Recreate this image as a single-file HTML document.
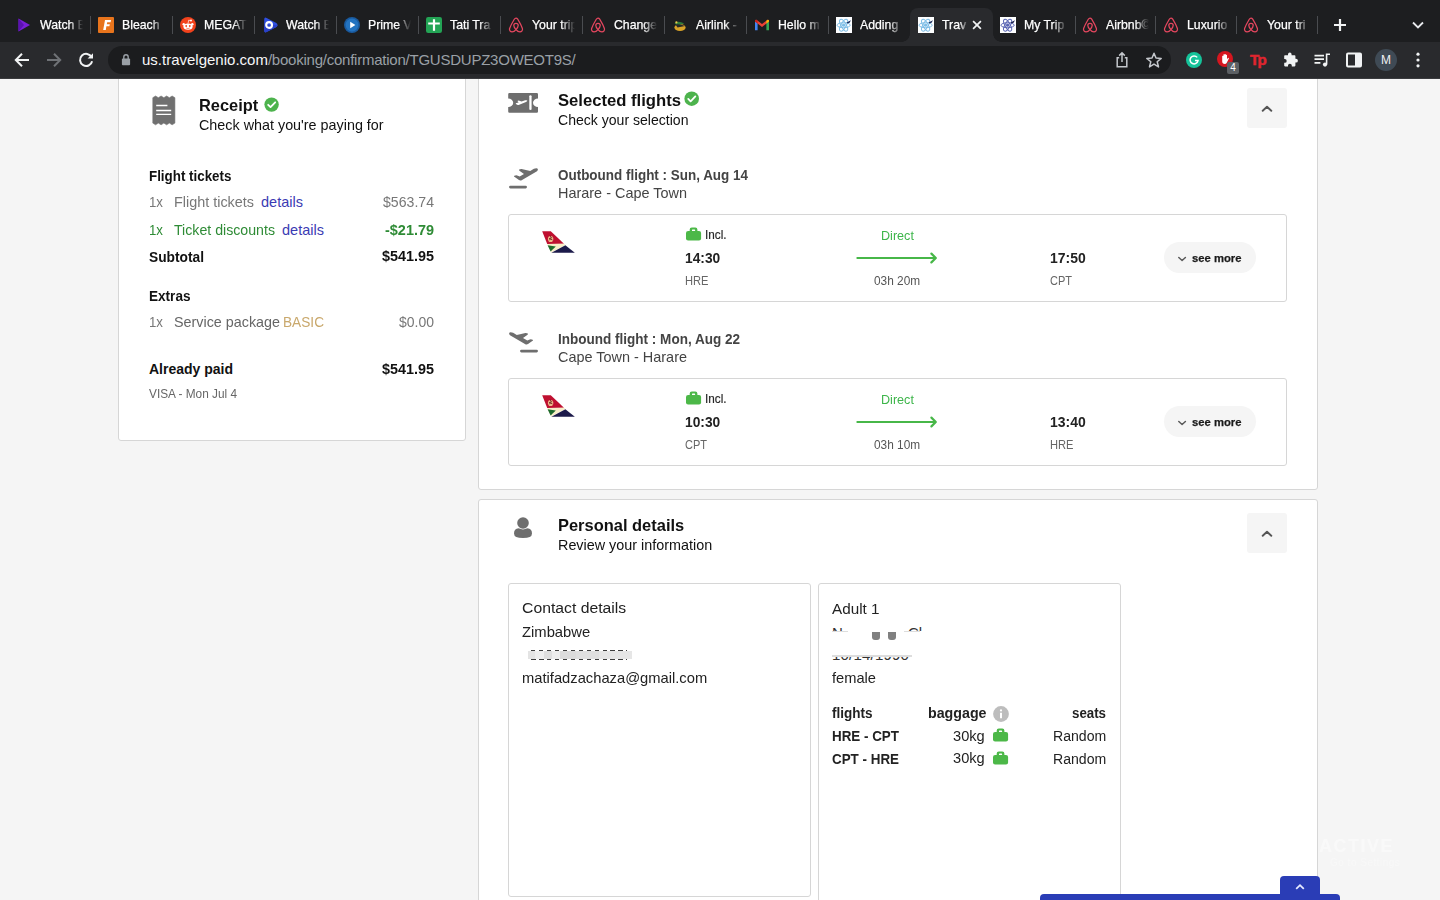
<!DOCTYPE html>
<html><head><meta charset="utf-8">
<style>
*{box-sizing:border-box;margin:0;padding:0}
html,body{width:1440px;height:900px;overflow:hidden;background:#f5f5f5;font-family:"Liberation Sans",sans-serif;}
#root{position:absolute;left:0;top:0;width:1440px;height:900px;overflow:hidden}
.abs{position:absolute}
/* chrome */
#tabstrip{position:absolute;left:0;top:0;width:1440px;height:42px;background:#1d1e20}
#toolbar{position:absolute;left:0;top:41.5px;width:1440px;height:37px;background:#292a2d}
#tbline{position:absolute;left:0;top:78px;width:1440px;height:1px;background:#3a3b3e}
#omni{position:absolute;left:108px;top:45.6px;width:1063px;height:28.4px;border-radius:14.2px;background:#1b1c1e}
.tab{position:absolute;top:8px;height:34px;width:82px}
.tab .t{position:absolute;left:32px;top:9px;width:46px;height:16px;line-height:16px;font-size:13px;color:#fff;-webkit-text-stroke:.25px #fff;white-space:nowrap;overflow:hidden;transform:scaleX(.945);transform-origin:0 50%;
 -webkit-mask-image:linear-gradient(90deg,#000 66%,transparent 97%);mask-image:linear-gradient(90deg,#000 66%,transparent 97%)}
.tab .f{position:absolute;left:8px;top:9px;width:16px;height:16px}
.sep{position:absolute;top:16px;width:1px;height:18px;background:#4a4c50}
#active{position:absolute;left:910px;top:8px;width:83px;height:34px;background:#292a2d;border-radius:8px 8px 0 0}
.tx{position:absolute;white-space:nowrap}
</style></head><body><div id="root">
<!--PAGE-->
<div class="abs" style="left:118px;top:60px;width:348px;height:380.5px;background:#fff;border:1px solid #d6d6d6;border-radius:3px;"></div>
<div class="abs" style="left:477.5px;top:60px;width:840.5px;height:429.5px;background:#fff;border:1px solid #d6d6d6;border-radius:3px;"></div>
<div class="abs" style="left:477.5px;top:498.8px;width:840.5px;height:420px;background:#fff;border:1px solid #d6d6d6;border-radius:3px;"></div>
<div class="abs" style="left:508px;top:214px;width:778.8px;height:88px;background:#fff;border:1px solid #d6d6d6;border-radius:3px;"></div>
<div class="abs" style="left:508px;top:378px;width:778.8px;height:88px;background:#fff;border:1px solid #d6d6d6;border-radius:3px;"></div>
<div class="abs" style="left:508px;top:583px;width:302.5px;height:313.5px;background:#fff;border:1px solid #d6d6d6;border-radius:3px;"></div>
<div class="abs" style="left:818px;top:583px;width:302.5px;height:330px;background:#fff;border:1px solid #d6d6d6;border-radius:3px;"></div>
<div class="abs" style="left:1247.25px;top:87.75px;width:39.5px;height:40px;background:#f5f5f5;border-radius:3px;"></div>
<svg class="abs" style="left:1257px;top:98.05px;width:20px;height:20px" viewBox="0 0 20 20"><path d="M5.7 12.8 L10 8.8 L14.3 12.8" stroke="#555" stroke-width="1.9" fill="none" stroke-linecap="round" stroke-linejoin="round"/></svg>
<div class="abs" style="left:1247.25px;top:512.75px;width:39.5px;height:40px;background:#f5f5f5;border-radius:3px;"></div>
<svg class="abs" style="left:1257px;top:523.05px;width:20px;height:20px" viewBox="0 0 20 20"><path d="M5.7 12.8 L10 8.8 L14.3 12.8" stroke="#555" stroke-width="1.9" fill="none" stroke-linecap="round" stroke-linejoin="round"/></svg>
<div class="abs" style="left:1164.4px;top:241.9px;width:92px;height:31.2px;background:#f5f5f5;border-radius:15.6px;"></div>
<svg class="abs" style="left:1176px;top:252.5px;width:12px;height:12px" viewBox="0 0 12 12"><path d="M2.8 4.5 L6.1 7.5 L9.4 4.5" stroke="#5a5a5a" stroke-width="1.5" fill="none" stroke-linecap="round" stroke-linejoin="round"/></svg>
<div class="abs" style="left:1164.4px;top:405.9px;width:92px;height:31.2px;background:#f5f5f5;border-radius:15.6px;"></div>
<svg class="abs" style="left:1176px;top:416.5px;width:12px;height:12px" viewBox="0 0 12 12"><path d="M2.8 4.5 L6.1 7.5 L9.4 4.5" stroke="#5a5a5a" stroke-width="1.5" fill="none" stroke-linecap="round" stroke-linejoin="round"/></svg>
<svg class="abs" style="left:152px;top:95px;width:24px;height:31px" viewBox="152 95 24 31"><path d="M152.80 97.7 L155.56 96.0 L158.33 97.7 L161.09 96.0 L163.85 97.7 L166.61 96.0 L169.38 97.7 L172.14 96.0 L174.90 97.7 L174.90 123.1 L172.14 124.8 L169.38 123.1 L166.61 124.8 L163.85 123.1 L161.09 124.8 L158.33 123.1 L155.56 124.8 L152.80 123.1 Z" fill="#707070" stroke="#707070" stroke-width=".6" stroke-linejoin="round"/><path d="M156.2 105.5 H167.4 M156.2 110.5 H171.2 M156.2 114.4 H171.2" stroke="#fff" stroke-width="1.3"/></svg>
<svg class="abs" style="left:263.721px;top:96.7211px;width:15.1579px;height:15.1579px" viewBox="-8 -8 16 16"><circle r="7.6" fill="#4db34d"/><path d="M-3.6 0.2 L-1.1 2.7 L3.8 -2.4" stroke="#fff" stroke-width="1.9" fill="none" stroke-linecap="round" stroke-linejoin="round"/></svg>
<svg class="abs" style="left:684.416px;top:91.2158px;width:15.3684px;height:15.3684px" viewBox="-8 -8 16 16"><circle r="7.6" fill="#4db34d"/><path d="M-3.6 0.2 L-1.1 2.7 L3.8 -2.4" stroke="#fff" stroke-width="1.9" fill="none" stroke-linecap="round" stroke-linejoin="round"/></svg>
<svg class="abs" style="left:507px;top:92px;width:32px;height:22px" viewBox="507 92 32 22"><path d="M509.4 93 H536.8 Q538 93 538 94.2 V98.4 A5 4.3 0 0 0 538 107 V111.6 Q538 112.8 536.8 112.8 H509.4 Q508.2 112.8 508.2 111.6 V107 A5 4.3 0 0 0 508.2 98.4 V94.2 Q508.2 93 509.4 93 Z" fill="#6e6e6e"/><path d="M530.45 96.3 V108.9" stroke="#fff" stroke-width="2.3" stroke-linecap="round"/><path d="M515.6 103.2 L518.6 102.4 L517.4 100.9 L518.6 100.5 L521.6 101.6 L525.2 100.3 Q527 99.9 527.3 100.6 Q527.4 101.4 526 102 L518.6 104.9 Q517.4 105.2 516.6 104.5 Z" fill="#fff"/></svg>
<svg class="abs" style="left:506px;top:166px;width:36px;height:24px" viewBox="506 166 36 24"><g><path d="M519.2 169.6 Q520 168.9 521.6 169 L530.2 171 L533.9 168.8 Q535.4 168.1 536.4 168.2 Q537.6 168.4 537.9 169.2 Q538 170.4 537 171.2 L521.2 180.4 Q520 180.8 519 180.1 L514 176.5 Q513.8 176 514.4 175.7 Q515.6 175.1 517.2 175.4 L519.7 176.6 L524 174 L519.4 170.7 Q518.8 170.1 519.2 169.6 Z" fill="#6e6e6e"/><path d="M510.4 187.05 H525.6" stroke="#6e6e6e" stroke-width="2.7" stroke-linecap="round"/></g></svg>
<svg class="abs" style="left:506px;top:330px;width:36px;height:24px" viewBox="506 166 36 24"><g transform="translate(1047 0) scale(-1 1)"><path d="M519.2 169.6 Q520 168.9 521.6 169 L530.2 171 L533.9 168.8 Q535.4 168.1 536.4 168.2 Q537.6 168.4 537.9 169.2 Q538 170.4 537 171.2 L521.2 180.4 Q520 180.8 519 180.1 L514 176.5 Q513.8 176 514.4 175.7 Q515.6 175.1 517.2 175.4 L519.7 176.6 L524 174 L519.4 170.7 Q518.8 170.1 519.2 169.6 Z" fill="#6e6e6e"/><path d="M510.4 187.05 H525.6" stroke="#6e6e6e" stroke-width="2.7" stroke-linecap="round"/></g></svg>
<svg class="abs" style="left:541px;top:229px;width:36px;height:25px" viewBox="541 229 36 25"><path d="M542.2 231.2 H550.8 L564 243.7 L547.2 243.9 Z" fill="#bf1030"/><ellipse cx="550.6" cy="239" rx="2.7" ry="3.1" fill="#f0b88a"/><path d="M549 238.3 L552.4 239.9 M549.2 240.3 L551.8 237.4 M550.2 235.6 L551.2 238" stroke="#5a1a12" stroke-width=".8"/><path d="M547.2 243.9 L564 243.7 L565.4 245 L551.2 252.6 Z" fill="#f8eec8"/><path d="M547.6 245.3 L555.8 246.4 L550.6 251.6 Z" fill="#1e6b2c"/><path d="M565.4 245.2 L574.8 252.7 H551.4 Z" fill="#1c1a4a"/></svg>
<svg class="abs" style="left:541px;top:393px;width:36px;height:25px" viewBox="541 229 36 25"><path d="M542.2 231.2 H550.8 L564 243.7 L547.2 243.9 Z" fill="#bf1030"/><ellipse cx="550.6" cy="239" rx="2.7" ry="3.1" fill="#f0b88a"/><path d="M549 238.3 L552.4 239.9 M549.2 240.3 L551.8 237.4 M550.2 235.6 L551.2 238" stroke="#5a1a12" stroke-width=".8"/><path d="M547.2 243.9 L564 243.7 L565.4 245 L551.2 252.6 Z" fill="#f8eec8"/><path d="M547.6 245.3 L555.8 246.4 L550.6 251.6 Z" fill="#1e6b2c"/><path d="M565.4 245.2 L574.8 252.7 H551.4 Z" fill="#1c1a4a"/></svg>
<svg class="abs" style="left:684.7px;top:226.3px;width:17.2px;height:15.6px" viewBox="-1 -1 17.2 15.6"><path fill-rule="evenodd" d="M3.7 4.6 V2.5 Q3.7 .4 5.8 .4 H9.3 Q11.4 .4 11.4 2.5 V4.6 Z M6 4.2 V3 Q6 2.4 6.6 2.4 H8.5 Q9.1 2.4 9.1 3 V4.2 Z" fill="#4cb848"/><rect x="0" y="3.9" width="15.1" height="9.7" rx="2.1" fill="#4cb848"/></svg>
<svg class="abs" style="left:684.7px;top:390.3px;width:17.2px;height:15.6px" viewBox="-1 -1 17.2 15.6"><path fill-rule="evenodd" d="M3.7 4.6 V2.5 Q3.7 .4 5.8 .4 H9.3 Q11.4 .4 11.4 2.5 V4.6 Z M6 4.2 V3 Q6 2.4 6.6 2.4 H8.5 Q9.1 2.4 9.1 3 V4.2 Z" fill="#4cb848"/><rect x="0" y="3.9" width="15.1" height="9.7" rx="2.1" fill="#4cb848"/></svg>
<svg class="abs" style="left:992px;top:726.9px;width:17.2px;height:15.6px" viewBox="-1 -1 17.2 15.6"><path fill-rule="evenodd" d="M3.7 4.6 V2.5 Q3.7 .4 5.8 .4 H9.3 Q11.4 .4 11.4 2.5 V4.6 Z M6 4.2 V3 Q6 2.4 6.6 2.4 H8.5 Q9.1 2.4 9.1 3 V4.2 Z" fill="#4cb848"/><rect x="0" y="3.9" width="15.1" height="9.7" rx="2.1" fill="#4cb848"/></svg>
<svg class="abs" style="left:992px;top:749.8px;width:17.2px;height:15.6px" viewBox="-1 -1 17.2 15.6"><path fill-rule="evenodd" d="M3.7 4.6 V2.5 Q3.7 .4 5.8 .4 H9.3 Q11.4 .4 11.4 2.5 V4.6 Z M6 4.2 V3 Q6 2.4 6.6 2.4 H8.5 Q9.1 2.4 9.1 3 V4.2 Z" fill="#4cb848"/><rect x="0" y="3.9" width="15.1" height="9.7" rx="2.1" fill="#4cb848"/></svg>
<svg class="abs" style="left:856px;top:251.3px;width:83px;height:14px" viewBox="856 -7 83 14"><path d="M857.4 0 H935.6 M931.4 -4.4 L935.8 0 L931.4 4.4" stroke="#47b748" stroke-width="2.2" fill="none" stroke-linecap="round" stroke-linejoin="round"/></svg>
<svg class="abs" style="left:856px;top:415.3px;width:83px;height:14px" viewBox="856 -7 83 14"><path d="M857.4 0 H935.6 M931.4 -4.4 L935.8 0 L931.4 4.4" stroke="#47b748" stroke-width="2.2" fill="none" stroke-linecap="round" stroke-linejoin="round"/></svg>
<svg class="abs" style="left:512px;top:516px;width:22px;height:24px" viewBox="512 516 22 24"><circle cx="523" cy="523" r="5.8" fill="#6e6e6e"/><path d="M514 533.4 Q514 528.6 518.6 528.3 Q523 530.6 527.4 528.3 Q532 528.6 532 533.4 Q532 538 523 538 Q514 538 514 533.4 Z" fill="#6e6e6e"/></svg>
<svg class="abs" style="left:992.8px;top:706px;width:16px;height:16px" viewBox="-8 -8 16 16"><circle r="7.9" fill="#bdbdbd"/><circle cx="0" cy="-3.6" r="1.1" fill="#fff"/><path d="M0 -1.2 V4.2" stroke="#fff" stroke-width="2"/></svg>
<div class="abs" style="left:527.9px;top:650.7px;width:104.1px;height:8.1px;background:linear-gradient(90deg,#e4e4e4 0 7%,#eeeeee 7% 15%,#dedede 15% 23%,#ececec 23% 31%,#dcdcdc 31% 46%,#e0e0e0 46% 68%,#e6e6e6 68% 100%)"></div>
<div class="abs" style="left:531.2px;top:649.8px;width:96px;height:1.1px;background:repeating-linear-gradient(90deg,#1c1c1c 0 4.2px,transparent 4.2px 7.95px);opacity:.85"></div>
<div class="abs" style="left:530.6px;top:659px;width:96.6px;height:1.1px;background:repeating-linear-gradient(90deg,#1c1c1c 0 4.6px,transparent 4.6px 7.95px);opacity:.85"></div>
<div class="abs" style="left:832px;top:627px;width:90px;height:4.4px;overflow:hidden"><div class="tx" style="left:0;top:-4.2px;font-size:15px;line-height:20px;color:#333">N</div><div class="tx" style="left:76px;top:-4.2px;font-size:15px;line-height:20px;color:#333">Cl</div></div>
<div class="abs" style="left:832px;top:630.6px;width:16px;height:1.2px;background:#ddd"></div><div class="abs" style="left:904px;top:630.6px;width:16px;height:1.2px;background:#ddd"></div>
<div class="abs" style="left:872px;top:631.8px;width:8.1px;height:8.3px;background:#808080;border-radius:0 0 3px 3px"></div>
<div class="abs" style="left:888.2px;top:631.8px;width:8.1px;height:8.3px;background:#808080;border-radius:0 0 3px 3px"></div>
<div class="abs" style="left:832px;top:656.2px;width:82px;height:4.3px;overflow:hidden"><div class="tx" style="left:0;top:-11.1px;font-size:15px;line-height:20px;color:#333;letter-spacing:.2px">10/14/1990</div></div>
<div class="abs" style="left:832px;top:655.4px;width:80px;height:1.2px;background:#ddd"></div>
<div class="abs" style="left:1039.7px;top:894.4px;width:300.3px;height:10px;background:#2a3db6;border-radius:4px 4px 0 0"></div>
<div class="abs" style="left:1280px;top:876.3px;width:39.8px;height:20px;background:#2a3db6;border-radius:4px 4px 0 0"></div>
<svg class="abs" style="left:1294px;top:881.4px;width:12px;height:12px" viewBox="0 0 12 12"><path d="M2.2 7.8 L6 4.2 L9.8 7.8" stroke="#e6ebff" stroke-width="1.8" fill="none"/></svg>
<div class="tx" style="left:1319px;top:836px;font-size:18px;line-height:20px;font-weight:bold;color:#fff;opacity:.42;letter-spacing:1.5px">ACTIVE</div><div class="tx" style="left:1330px;top:856px;font-size:10px;line-height:14px;color:#fff;opacity:.3;letter-spacing:.5px">Go to Settings</div>
<div class="tx" style="left:199.00px;top:94.78px;height:20px;line-height:20px;font-size:16.50px;color:#111;font-weight:bold;transform:scaleX(0.9948);transform-origin:0 50%;">Receipt</div>
<div class="tx" style="left:199.00px;top:114.88px;height:20px;line-height:20px;font-size:14.50px;color:#111;transform:scaleX(0.9896);transform-origin:0 50%;">Check what you're paying for</div>
<div class="tx" style="left:149.00px;top:166.15px;height:20px;line-height:20px;font-size:14.00px;color:#111;font-weight:bold;transform:scaleX(0.9542);transform-origin:0 50%;">Flight tickets</div>
<div class="tx" style="left:149.00px;top:191.58px;height:20px;line-height:20px;font-size:14.50px;color:#777;transform:scaleX(0.9134);transform-origin:0 50%;">1x</div>
<div class="tx" style="left:174.00px;top:191.58px;height:20px;line-height:20px;font-size:14.50px;color:#777;transform:scaleX(0.9926);transform-origin:0 50%;">Flight tickets</div>
<div class="tx" style="left:261.00px;top:191.58px;height:20px;line-height:20px;font-size:14.50px;color:#3b3bb3;">details</div>
<div class="tx" style="left:383.00px;top:191.58px;height:20px;line-height:20px;font-size:14.50px;color:#777;transform:scaleX(0.9729);transform-origin:0 50%;">$563.74</div>
<div class="tx" style="left:149.00px;top:219.98px;height:20px;line-height:20px;font-size:14.50px;color:#2e8b35;transform:scaleX(0.9134);transform-origin:0 50%;">1x</div>
<div class="tx" style="left:174.00px;top:219.98px;height:20px;line-height:20px;font-size:14.50px;color:#2e8b35;transform:scaleX(0.9766);transform-origin:0 50%;">Ticket discounts</div>
<div class="tx" style="left:282.00px;top:219.98px;height:20px;line-height:20px;font-size:14.50px;color:#3b3bb3;">details</div>
<div class="tx" style="left:385.00px;top:219.98px;height:20px;line-height:20px;font-size:14.50px;color:#2e8b35;font-weight:bold;transform:scaleX(0.9962);transform-origin:0 50%;">-$21.79</div>
<div class="tx" style="left:149.00px;top:246.65px;height:20px;line-height:20px;font-size:14.00px;color:#111;font-weight:bold;transform:scaleX(0.9821);transform-origin:0 50%;">Subtotal</div>
<div class="tx" style="left:382.00px;top:246.48px;height:20px;line-height:20px;font-size:14.50px;color:#111;font-weight:bold;transform:scaleX(0.9920);transform-origin:0 50%;">$541.95</div>
<div class="tx" style="left:149.00px;top:286.15px;height:20px;line-height:20px;font-size:14.00px;color:#111;font-weight:bold;transform:scaleX(0.9693);transform-origin:0 50%;">Extras</div>
<div class="tx" style="left:149.00px;top:311.68px;height:20px;line-height:20px;font-size:14.50px;color:#777;transform:scaleX(0.9134);transform-origin:0 50%;">1x</div>
<div class="tx" style="left:174.00px;top:311.68px;height:20px;line-height:20px;font-size:14.50px;color:#666;transform:scaleX(0.9888);transform-origin:0 50%;">Service package</div>
<div class="tx" style="left:283.00px;top:311.85px;height:20px;line-height:20px;font-size:14.00px;color:#c9a86c;transform:scaleX(0.9758);transform-origin:0 50%;">BASIC</div>
<div class="tx" style="left:399.00px;top:311.68px;height:20px;line-height:20px;font-size:14.50px;color:#777;transform:scaleX(0.9643);transform-origin:0 50%;">$0.00</div>
<div class="tx" style="left:149.00px;top:359.15px;height:20px;line-height:20px;font-size:14.00px;color:#111;font-weight:bold;">Already paid</div>
<div class="tx" style="left:382.00px;top:358.98px;height:20px;line-height:20px;font-size:14.50px;color:#111;font-weight:bold;transform:scaleX(0.9920);transform-origin:0 50%;">$541.95</div>
<div class="tx" style="left:149.00px;top:383.94px;height:20px;line-height:20px;font-size:12.00px;color:#666;transform:scaleX(0.9846);transform-origin:0 50%;">VISA - Mon Jul 4</div>
<div class="tx" style="left:558.00px;top:90.28px;height:20px;line-height:20px;font-size:16.50px;color:#111;font-weight:bold;transform:scaleX(1.0086);transform-origin:0 50%;">Selected flights</div>
<div class="tx" style="left:558.00px;top:110.48px;height:20px;line-height:20px;font-size:14.50px;color:#111;transform:scaleX(0.9696);transform-origin:0 50%;">Check your selection</div>
<div class="tx" style="left:558.00px;top:164.58px;height:20px;line-height:20px;font-size:14.20px;color:#444;font-weight:bold;transform:scaleX(0.9479);transform-origin:0 50%;">Outbound flight : Sun, Aug 14</div>
<div class="tx" style="left:558.00px;top:183.48px;height:20px;line-height:20px;font-size:14.50px;color:#444;transform:scaleX(0.9961);transform-origin:0 50%;">Harare - Cape Town</div>
<div class="tx" style="left:558.00px;top:328.58px;height:20px;line-height:20px;font-size:14.20px;color:#444;font-weight:bold;transform:scaleX(0.9530);transform-origin:0 50%;">Inbound flight : Mon, Aug 22</div>
<div class="tx" style="left:558.00px;top:347.48px;height:20px;line-height:20px;font-size:14.50px;color:#444;transform:scaleX(0.9961);transform-origin:0 50%;">Cape Town - Harare</div>
<div class="tx" style="left:704.50px;top:225.17px;height:20px;line-height:20px;font-size:12.50px;color:#2a2a2a;-webkit-text-stroke:.2px #2a2a2a;transform:scaleX(0.9373);transform-origin:0 50%;">Incl.</div>
<div class="tx" style="left:685.30px;top:247.85px;height:20px;line-height:20px;font-size:14.00px;color:#222;font-weight:bold;transform:scaleX(0.9829);transform-origin:0 50%;">14:30</div>
<div class="tx" style="left:685.00px;top:271.20px;height:20px;line-height:20px;font-size:13.00px;color:#666;transform:scaleX(0.8560);transform-origin:0 50%;">HRE</div>
<div class="tx" style="left:880.60px;top:226.27px;height:20px;line-height:20px;font-size:12.50px;color:#3db54a;transform:scaleX(1.0075);transform-origin:0 50%;">Direct</div>
<div class="tx" style="left:873.90px;top:271.14px;height:20px;line-height:20px;font-size:12.00px;color:#555;transform:scaleX(0.9871);transform-origin:0 50%;">03h 20m</div>
<div class="tx" style="left:1049.80px;top:247.85px;height:20px;line-height:20px;font-size:14.00px;color:#222;font-weight:bold;transform:scaleX(0.9969);transform-origin:0 50%;">17:50</div>
<div class="tx" style="left:1050.00px;top:271.20px;height:20px;line-height:20px;font-size:13.00px;color:#666;transform:scaleX(0.8462);transform-origin:0 50%;">CPT</div>
<div class="tx" style="left:1192.00px;top:247.92px;height:20px;line-height:20px;font-size:11.50px;color:#1a1a1a;font-weight:bold;-webkit-text-stroke:.25px #1a1a1a;transform:scaleX(0.9799);transform-origin:0 50%;">see more</div>
<div class="tx" style="left:704.50px;top:389.17px;height:20px;line-height:20px;font-size:12.50px;color:#2a2a2a;-webkit-text-stroke:.2px #2a2a2a;transform:scaleX(0.9373);transform-origin:0 50%;">Incl.</div>
<div class="tx" style="left:685.30px;top:411.85px;height:20px;line-height:20px;font-size:14.00px;color:#222;font-weight:bold;transform:scaleX(0.9829);transform-origin:0 50%;">10:30</div>
<div class="tx" style="left:685.00px;top:435.20px;height:20px;line-height:20px;font-size:13.00px;color:#666;transform:scaleX(0.8462);transform-origin:0 50%;">CPT</div>
<div class="tx" style="left:880.60px;top:390.27px;height:20px;line-height:20px;font-size:12.50px;color:#3db54a;transform:scaleX(1.0075);transform-origin:0 50%;">Direct</div>
<div class="tx" style="left:873.90px;top:435.14px;height:20px;line-height:20px;font-size:12.00px;color:#555;transform:scaleX(0.9871);transform-origin:0 50%;">03h 10m</div>
<div class="tx" style="left:1049.80px;top:411.85px;height:20px;line-height:20px;font-size:14.00px;color:#222;font-weight:bold;transform:scaleX(0.9969);transform-origin:0 50%;">13:40</div>
<div class="tx" style="left:1050.00px;top:435.20px;height:20px;line-height:20px;font-size:13.00px;color:#666;transform:scaleX(0.8560);transform-origin:0 50%;">HRE</div>
<div class="tx" style="left:1192.00px;top:411.92px;height:20px;line-height:20px;font-size:11.50px;color:#1a1a1a;font-weight:bold;-webkit-text-stroke:.25px #1a1a1a;transform:scaleX(0.9799);transform-origin:0 50%;">see more</div>
<div class="tx" style="left:558.30px;top:514.88px;height:20px;line-height:20px;font-size:16.50px;color:#111;font-weight:bold;transform:scaleX(0.9971);transform-origin:0 50%;">Personal details</div>
<div class="tx" style="left:558.30px;top:535.08px;height:20px;line-height:20px;font-size:14.50px;color:#111;transform:scaleX(0.9913);transform-origin:0 50%;">Review your information</div>
<div class="tx" style="left:521.80px;top:598.43px;height:20px;line-height:20px;font-size:15.50px;color:#222;transform:scaleX(1.0163);transform-origin:0 50%;">Contact details</div>
<div class="tx" style="left:521.80px;top:621.78px;height:20px;line-height:20px;font-size:14.50px;color:#222;transform:scaleX(1.0196);transform-origin:0 50%;">Zimbabwe</div>
<div class="tx" style="left:521.80px;top:667.68px;height:20px;line-height:20px;font-size:14.50px;color:#222;transform:scaleX(1.0156);transform-origin:0 50%;">matifadzachaza@gmail.com</div>
<div class="tx" style="left:832.00px;top:598.53px;height:20px;line-height:20px;font-size:15.50px;color:#222;transform:scaleX(0.9841);transform-origin:0 50%;">Adult 1</div>
<div class="tx" style="left:832.00px;top:667.98px;height:20px;line-height:20px;font-size:14.50px;color:#222;transform:scaleX(1.0108);transform-origin:0 50%;">female</div>
<div class="tx" style="left:832.00px;top:702.85px;height:20px;line-height:20px;font-size:14.00px;color:#222;font-weight:bold;transform:scaleX(0.9643);transform-origin:0 50%;">flights</div>
<div class="tx" style="left:928.00px;top:702.85px;height:20px;line-height:20px;font-size:14.00px;color:#222;font-weight:bold;transform:scaleX(1.0160);transform-origin:0 50%;">baggage</div>
<div class="tx" style="left:1072.00px;top:702.85px;height:20px;line-height:20px;font-size:14.00px;color:#222;font-weight:bold;transform:scaleX(0.9494);transform-origin:0 50%;">seats</div>
<div class="tx" style="left:832.00px;top:725.75px;height:20px;line-height:20px;font-size:14.00px;color:#222;font-weight:bold;transform:scaleX(0.9571);transform-origin:0 50%;">HRE - CPT</div>
<div class="tx" style="left:953.30px;top:725.58px;height:20px;line-height:20px;font-size:14.50px;color:#222;transform:scaleX(1.0078);transform-origin:0 50%;">30kg</div>
<div class="tx" style="left:1052.70px;top:725.75px;height:20px;line-height:20px;font-size:14.00px;color:#222;transform:scaleX(1.0071);transform-origin:0 50%;">Random</div>
<div class="tx" style="left:832.00px;top:748.65px;height:20px;line-height:20px;font-size:14.00px;color:#222;font-weight:bold;transform:scaleX(0.9571);transform-origin:0 50%;">CPT - HRE</div>
<div class="tx" style="left:953.30px;top:748.48px;height:20px;line-height:20px;font-size:14.50px;color:#222;transform:scaleX(1.0078);transform-origin:0 50%;">30kg</div>
<div class="tx" style="left:1052.70px;top:748.65px;height:20px;line-height:20px;font-size:14.00px;color:#222;transform:scaleX(1.0071);transform-origin:0 50%;">Random</div>
<!--CHROME-->
<div id="tabstrip"></div><div id="toolbar"></div><div id="active"></div><div class="abs" style="left:902px;top:34px;width:8px;height:8px;background:radial-gradient(circle at 0 0,#1d1e20 7.5px,#292a2d 8px)"></div><div class="abs" style="left:993px;top:34px;width:8px;height:8px;background:radial-gradient(circle at 100% 0,#1d1e20 7.5px,#292a2d 8px)"></div>
<div class="tab" style="left:8px"><svg class="f" viewBox="0 0 16 16"><path d="M2.5 1.5 L14 8 L2.5 14.5 Z" fill="#7a1fd6"/><path d="M2.5 1.5 L8 8 L2.5 14.5 Z" fill="#5a12b0"/></svg><div class="t" style="width:47px">Watch B</div></div>
<div class="tab" style="left:90px"><svg class="f" viewBox="0 0 16 16"><rect width="16" height="16" rx="1" fill="#e8741c"/><path d="M5.2 13 L7 3 H13 L12.6 5.2 H9.2 L8.8 7.2 H11.8 L11.4 9.3 H8.4 L7.8 13 Z" fill="#fff"/></svg><div class="t" style="width:47px">Bleach</div></div>
<div class="tab" style="left:172px"><svg class="f" viewBox="0 0 16 16"><circle cx="8" cy="8" r="8" fill="#f2421c"/><ellipse cx="8" cy="9.6" rx="4.6" ry="3.2" fill="#fff"/><circle cx="12.3" cy="7.3" r="1.2" fill="#fff"/><circle cx="3.7" cy="7.3" r="1.2" fill="#fff"/><circle cx="11" cy="3.6" r="1" fill="#fff"/><path d="M8 6.5 L8.7 3.2 L11 3.7" stroke="#fff" stroke-width=".7" fill="none"/><circle cx="6.2" cy="9" r=".9" fill="#f2421c"/><circle cx="9.8" cy="9" r=".9" fill="#f2421c"/><path d="M6.2 11 Q8 12.2 9.8 11" stroke="#f2421c" stroke-width=".6" fill="none"/></svg><div class="t" style="width:47px">MEGAT</div></div>
<div class="tab" style="left:254px"><svg class="f" viewBox="0 0 16 16"><path d="M2.2 2.4 Q2.2 -.2 4.6 1 L14.4 6 Q16.6 8 14.4 10 L4.6 15 Q2.2 16.2 2.2 13.6 Z" fill="#2f4fe0"/><path d="M2.2 8 V13.6 Q2.2 16.2 4.6 15 L14.4 10 Q15.4 9.2 15.6 8 Z" fill="#2a41c8"/><circle cx="7.1" cy="8" r="2.9" fill="none" stroke="#fff" stroke-width="2.1"/></svg><div class="t" style="width:47px">Watch B</div></div>
<div class="tab" style="left:336px"><svg class="f" viewBox="0 0 16 16"><circle cx="8" cy="8" r="8" fill="#1a5a9e"/><circle cx="8" cy="8" r="6.4" fill="#2373c0"/><path d="M6.2 4.8 L11.4 8 L6.2 11.2 Z" fill="#fff"/></svg><div class="t" style="width:47px">Prime V</div></div>
<div class="tab" style="left:418px"><svg class="f" viewBox="0 0 16 16"><rect width="16" height="16" rx="2.2" fill="#23a455"/><path d="M6.9 2.2 H9.1 V5.6 H13.8 V7.6 H9.1 V13.8 H6.9 V7.6 H2.2 V5.6 H6.9 Z" fill="#fff"/></svg><div class="t" style="width:47px">Tati Tra</div></div>
<div class="tab" style="left:500px"><svg class="f" viewBox="0 0 16 16"><path d="M8 12.6 C6.6 10.9 5.8 9.6 5.8 8.4 C5.8 7.1 6.8 6.3 8 6.3 C9.2 6.3 10.2 7.1 10.2 8.4 C10.2 9.6 9.4 10.9 8 12.6 Z M8 12.6 C6.9 13.9 5.6 14.9 4.1 14.9 C2.3 14.9 1.1 13.3 1.6 11.5 C2.3 9.5 4.6 5 6.3 2.2 C6.8 1.4 7.3 1 8 1 C8.7 1 9.2 1.4 9.7 2.2 C11.4 5 13.7 9.5 14.4 11.5 C14.9 13.3 13.7 14.9 11.9 14.9 C10.4 14.9 9.1 13.9 8 12.6 Z" fill="none" stroke="#e5475f" stroke-width="1.25"/></svg><div class="t" style="width:47px">Your trip</div></div>
<div class="tab" style="left:582px"><svg class="f" viewBox="0 0 16 16"><path d="M8 12.6 C6.6 10.9 5.8 9.6 5.8 8.4 C5.8 7.1 6.8 6.3 8 6.3 C9.2 6.3 10.2 7.1 10.2 8.4 C10.2 9.6 9.4 10.9 8 12.6 Z M8 12.6 C6.9 13.9 5.6 14.9 4.1 14.9 C2.3 14.9 1.1 13.3 1.6 11.5 C2.3 9.5 4.6 5 6.3 2.2 C6.8 1.4 7.3 1 8 1 C8.7 1 9.2 1.4 9.7 2.2 C11.4 5 13.7 9.5 14.4 11.5 C14.9 13.3 13.7 14.9 11.9 14.9 C10.4 14.9 9.1 13.9 8 12.6 Z" fill="none" stroke="#e5475f" stroke-width="1.25"/></svg><div class="t" style="width:47px">Change</div></div>
<div class="tab" style="left:664px"><svg class="f" viewBox="0 0 16 16"><ellipse cx="8" cy="10.5" rx="5.6" ry="3.6" fill="#d9a227"/><path d="M2.6 6.2 Q6 3.2 12.4 6.6 Q8 7.4 6 9.4 Z" fill="#2f7d3a"/><path d="M3.5 7.5 Q8 6.8 13.2 9 Q9 10 5.5 10.4 Z" fill="#26282a"/><circle cx="4.4" cy="5.4" r="1.1" fill="#e9c84a"/></svg><div class="t" style="width:47px">Airlink -</div></div>
<div class="tab" style="left:746px"><svg class="f" viewBox="0 0 16 16"><path d="M1 13.2 V4 L3.6 6 V13.2 Z" fill="#4285f4"/><path d="M15 13.2 V4 L12.4 6 V13.2 Z" fill="#34a853"/><path d="M1 4 Q1 2.6 2.4 2.7 L8 7 L13.6 2.7 Q15 2.6 15 4 L15 4.6 L8 10 L1 4.6 Z" fill="#ea4335"/><path d="M1 4.6 V3.9 Q1 2.6 2.4 2.7 L3.6 3.7 V6.6 Z" fill="#c5221f"/><path d="M15 4.6 V3.9 Q15 2.6 13.6 2.7 L12.4 3.7 V6.6 Z" fill="#fbbc04"/></svg><div class="t" style="width:47px">Hello m</div></div>
<div class="tab" style="left:828px"><svg class="f" viewBox="0 0 16 16"><rect width="16" height="16" fill="#fdfeff"/><g fill="none" stroke="#7dbde6" stroke-width="1"><ellipse cx="7.6" cy="8.2" rx="6.6" ry="2.5"/><ellipse cx="7.6" cy="8.2" rx="6.6" ry="2.5" transform="rotate(60 7.6 8.2)"/><ellipse cx="7.6" cy="8.2" rx="6.6" ry="2.5" transform="rotate(120 7.6 8.2)"/></g><circle cx="7.6" cy="8.2" r="1.6" fill="#7dbde6"/><path d="M10.5 5.5 L15 3.2 L13.6 5.8 L11.6 6.6 Z" fill="#1c2b5a"/></svg><div class="t" style="width:47px">Adding</div></div>
<div class="tab" style="left:910px"><svg class="f" viewBox="0 0 16 16"><rect width="16" height="16" fill="#fdfeff"/><g fill="none" stroke="#7dbde6" stroke-width="1"><ellipse cx="7.6" cy="8.2" rx="6.6" ry="2.5"/><ellipse cx="7.6" cy="8.2" rx="6.6" ry="2.5" transform="rotate(60 7.6 8.2)"/><ellipse cx="7.6" cy="8.2" rx="6.6" ry="2.5" transform="rotate(120 7.6 8.2)"/></g><circle cx="7.6" cy="8.2" r="1.6" fill="#7dbde6"/><path d="M10.5 5.5 L15 3.2 L13.6 5.8 L11.6 6.6 Z" fill="#1c2b5a"/></svg><div class="t" style="width:29px">Trav</div><svg class="abs" style="left:59px;top:9px;width:16px;height:16px" viewBox="0 0 16 16"><path d="M4.1 4.1 L11.9 11.9 M11.9 4.1 L4.1 11.9" stroke="#f1f3f4" stroke-width="1.7" fill="none"/></svg></div>
<div class="tab" style="left:992px"><svg class="f" viewBox="0 0 16 16"><rect width="16" height="16" fill="#fdfeff"/><g fill="none" stroke="#5a66b4" stroke-width="1"><ellipse cx="7.6" cy="8.2" rx="6.6" ry="2.5"/><ellipse cx="7.6" cy="8.2" rx="6.6" ry="2.5" transform="rotate(60 7.6 8.2)"/><ellipse cx="7.6" cy="8.2" rx="6.6" ry="2.5" transform="rotate(120 7.6 8.2)"/></g><circle cx="7.6" cy="8.2" r="1.6" fill="#5a66b4"/><path d="M10.5 5.5 L15 3.2 L13.6 5.8 L11.6 6.6 Z" fill="#1c2350"/></svg><div class="t" style="width:47px">My Trip</div></div>
<div class="tab" style="left:1073.5px"><svg class="f" viewBox="0 0 16 16"><path d="M8 12.6 C6.6 10.9 5.8 9.6 5.8 8.4 C5.8 7.1 6.8 6.3 8 6.3 C9.2 6.3 10.2 7.1 10.2 8.4 C10.2 9.6 9.4 10.9 8 12.6 Z M8 12.6 C6.9 13.9 5.6 14.9 4.1 14.9 C2.3 14.9 1.1 13.3 1.6 11.5 C2.3 9.5 4.6 5 6.3 2.2 C6.8 1.4 7.3 1 8 1 C8.7 1 9.2 1.4 9.7 2.2 C11.4 5 13.7 9.5 14.4 11.5 C14.9 13.3 13.7 14.9 11.9 14.9 C10.4 14.9 9.1 13.9 8 12.6 Z" fill="none" stroke="#e5475f" stroke-width="1.25"/></svg><div class="t" style="width:47px">Airbnb©</div></div>
<div class="tab" style="left:1154.5px"><svg class="f" viewBox="0 0 16 16"><path d="M8 12.6 C6.6 10.9 5.8 9.6 5.8 8.4 C5.8 7.1 6.8 6.3 8 6.3 C9.2 6.3 10.2 7.1 10.2 8.4 C10.2 9.6 9.4 10.9 8 12.6 Z M8 12.6 C6.9 13.9 5.6 14.9 4.1 14.9 C2.3 14.9 1.1 13.3 1.6 11.5 C2.3 9.5 4.6 5 6.3 2.2 C6.8 1.4 7.3 1 8 1 C8.7 1 9.2 1.4 9.7 2.2 C11.4 5 13.7 9.5 14.4 11.5 C14.9 13.3 13.7 14.9 11.9 14.9 C10.4 14.9 9.1 13.9 8 12.6 Z" fill="none" stroke="#e5475f" stroke-width="1.25"/></svg><div class="t" style="width:47px">Luxurio</div></div>
<div class="tab" style="left:1235.2px"><svg class="f" viewBox="0 0 16 16"><path d="M8 12.6 C6.6 10.9 5.8 9.6 5.8 8.4 C5.8 7.1 6.8 6.3 8 6.3 C9.2 6.3 10.2 7.1 10.2 8.4 C10.2 9.6 9.4 10.9 8 12.6 Z M8 12.6 C6.9 13.9 5.6 14.9 4.1 14.9 C2.3 14.9 1.1 13.3 1.6 11.5 C2.3 9.5 4.6 5 6.3 2.2 C6.8 1.4 7.3 1 8 1 C8.7 1 9.2 1.4 9.7 2.2 C11.4 5 13.7 9.5 14.4 11.5 C14.9 13.3 13.7 14.9 11.9 14.9 C10.4 14.9 9.1 13.9 8 12.6 Z" fill="none" stroke="#e5475f" stroke-width="1.25"/></svg><div class="t" style="width:47px">Your tri</div></div>
<div class="sep" style="left:90px"></div>
<div class="sep" style="left:172px"></div>
<div class="sep" style="left:254px"></div>
<div class="sep" style="left:336px"></div>
<div class="sep" style="left:418px"></div>
<div class="sep" style="left:500px"></div>
<div class="sep" style="left:582px"></div>
<div class="sep" style="left:664px"></div>
<div class="sep" style="left:746px"></div>
<div class="sep" style="left:828px"></div>
<div class="sep" style="left:1074.5px"></div>
<div class="sep" style="left:1155.2px"></div>
<div class="sep" style="left:1236.2px"></div>
<div class="sep" style="left:1317.3px"></div>
<svg class="abs" style="left:1331px;top:16px;width:18px;height:18px" viewBox="0 0 18 18"><path d="M9 3 V15 M3 9 H15" stroke="#f1f3f4" stroke-width="2.2" fill="none"/></svg>
<svg class="abs" style="left:1410px;top:17px;width:16px;height:16px" viewBox="0 0 16 16"><path d="M3 5.5 L8 10.5 L13 5.5" stroke="#e8eaed" stroke-width="1.8" fill="none"/></svg>
<div id="omni"></div><div id="tbline"></div>
<svg class="abs" style="left:13px;top:51px;width:18px;height:18px" viewBox="0 0 18 18"><path d="M16 9 H3.2 M9 2.8 L2.8 9 L9 15.2" stroke="#f1f3f4" stroke-width="2" fill="none"/></svg>
<svg class="abs" style="left:45px;top:51px;width:18px;height:18px" viewBox="0 0 18 18"><path d="M2 9 H14.8 M9 2.8 L15.2 9 L9 15.2" stroke="#6f7276" stroke-width="2" fill="none"/></svg>
<svg class="abs" style="left:77px;top:51px;width:18px;height:18px" viewBox="0 0 18 18"><path d="M14.6 6.2 A6.1 6.1 0 1 0 15.1 10.2" stroke="#f1f3f4" stroke-width="2" fill="none"/><path d="M16 2.2 V7.6 H10.6 Z" fill="#f1f3f4"/></svg>
<svg class="abs" style="left:120px;top:53px;width:12px;height:14px" viewBox="0 0 12 14"><rect x="1.9" y="5.6" width="8.2" height="6.6" rx=".9" fill="#9aa0a6"/><path d="M3.8 6 V3.9 A2.2 2.2 0 0 1 8.2 3.9 V6" stroke="#9aa0a6" stroke-width="1.4" fill="none"/></svg>
<div class="tx" id="url" style="left:142px;top:50px;height:20px;line-height:20px;font-size:15px;color:#9aa0a6;letter-spacing:0px"><span style="color:#f6f7f8">us.travelgenio.com</span><span style="letter-spacing:-.235px">/booking/confirmation/TGUSDUPZ3OWEOT9S/</span></div>
<svg class="abs" style="left:1114px;top:51px;width:16px;height:18px" viewBox="0 0 16 18"><path d="M5.2 6.8 H3.2 V15.8 H12.8 V6.8 H10.8 M8 11 V2 M5.2 4.6 L8 1.8 L10.8 4.6" stroke="#c4c7cc" stroke-width="1.5" fill="none"/></svg>
<svg class="abs" style="left:1145px;top:51px;width:18px;height:18px" viewBox="0 0 18 18"><path d="M9 2.2 L11 7 L16.2 7.4 L12.2 10.8 L13.5 15.9 L9 13.1 L4.5 15.9 L5.8 10.8 L1.8 7.4 L7 7 Z" stroke="#c4c7cc" stroke-width="1.5" fill="none" stroke-linejoin="round"/></svg>
<svg class="abs" style="left:1186px;top:52px;width:16px;height:16px" viewBox="0 0 16 16"><circle cx="8" cy="8" r="8" fill="#15c39a"/><path d="M11.2 5.4 A4 4 0 1 0 12 8.6 H9" stroke="#fff" stroke-width="1.5" fill="none"/></svg>
<svg class="abs" style="left:1217px;top:51px;width:16px;height:16px" viewBox="0 0 16 16"><circle cx="8" cy="8" r="8" fill="#d6161f"/><path d="M5.2 8.6 V5 Q5.8 4.4 6.4 5 V3.6 Q7 3 7.6 3.6 V3.2 Q8.2 2.6 8.8 3.2 V4 Q9.4 3.4 10 4 V8 L11.4 6.8 Q12.2 7 11.8 7.8 L9.6 12 Q9 13 7.8 13 Q5.2 13 5.2 10.6 Z" fill="#fff"/></svg>
<div class="abs" style="left:1227px;top:62px;width:12px;height:12px;background:#5c6064;border-radius:2px;color:#fff;font-size:10px;line-height:12px;text-align:center">4</div>
<div class="tx" style="left:1250px;top:50px;height:20px;line-height:20px;font-size:15px;font-weight:bold;color:#e0252f;letter-spacing:-1.6px;-webkit-text-stroke:.5px #e0252f">Tp</div>
<svg class="abs" style="left:1281px;top:51px;width:18px;height:18px" viewBox="0 0 18 18"><path d="M7 3.4 A1.8 1.8 0 0 1 10.6 3.4 V4.2 H13.6 Q14.4 4.2 14.4 5 V7.8 H15 A1.9 1.9 0 0 1 15 11.6 H14.4 V14.6 Q14.4 15.4 13.6 15.4 H10.8 V14.6 A1.9 1.9 0 0 0 7 14.6 V15.4 H4 Q3.2 15.4 3.2 14.6 V11.8 H3.8 A1.9 1.9 0 0 0 3.8 8 H3.2 V5 Q3.2 4.2 4 4.2 H7 Z" fill="#f1f3f4"/></svg>
<svg class="abs" style="left:1313px;top:51px;width:18px;height:18px" viewBox="0 0 18 18"><path d="M1.5 4.6 H11 M1.5 8.2 H11 M1.5 11.8 H7.4" stroke="#f1f3f4" stroke-width="1.7" fill="none"/><path d="M13.6 13.6 V3.2 H17" stroke="#f1f3f4" stroke-width="1.6" fill="none"/><circle cx="12" cy="13.6" r="2.1" fill="#f1f3f4"/></svg>
<svg class="abs" style="left:1346px;top:52px;width:16px;height:16px" viewBox="0 0 16 16"><rect x="1" y="1.4" width="14" height="13.2" rx="1" fill="none" stroke="#f1f3f4" stroke-width="2"/><rect x="9" y="1.4" width="6" height="13.2" fill="#f1f3f4"/></svg>
<div class="abs" style="left:1375px;top:49px;width:22px;height:22px;border-radius:11px;background:#3f4a55;color:#f1f3f4;font-size:12px;line-height:22px;text-align:center">M</div>
<svg class="abs" style="left:1416px;top:52px;width:4px;height:16px" viewBox="0 0 4 16"><circle cx="2" cy="2.2" r="1.6" fill="#f1f3f4"/><circle cx="2" cy="8" r="1.6" fill="#f1f3f4"/><circle cx="2" cy="13.8" r="1.6" fill="#f1f3f4"/></svg>
</div></body></html>
